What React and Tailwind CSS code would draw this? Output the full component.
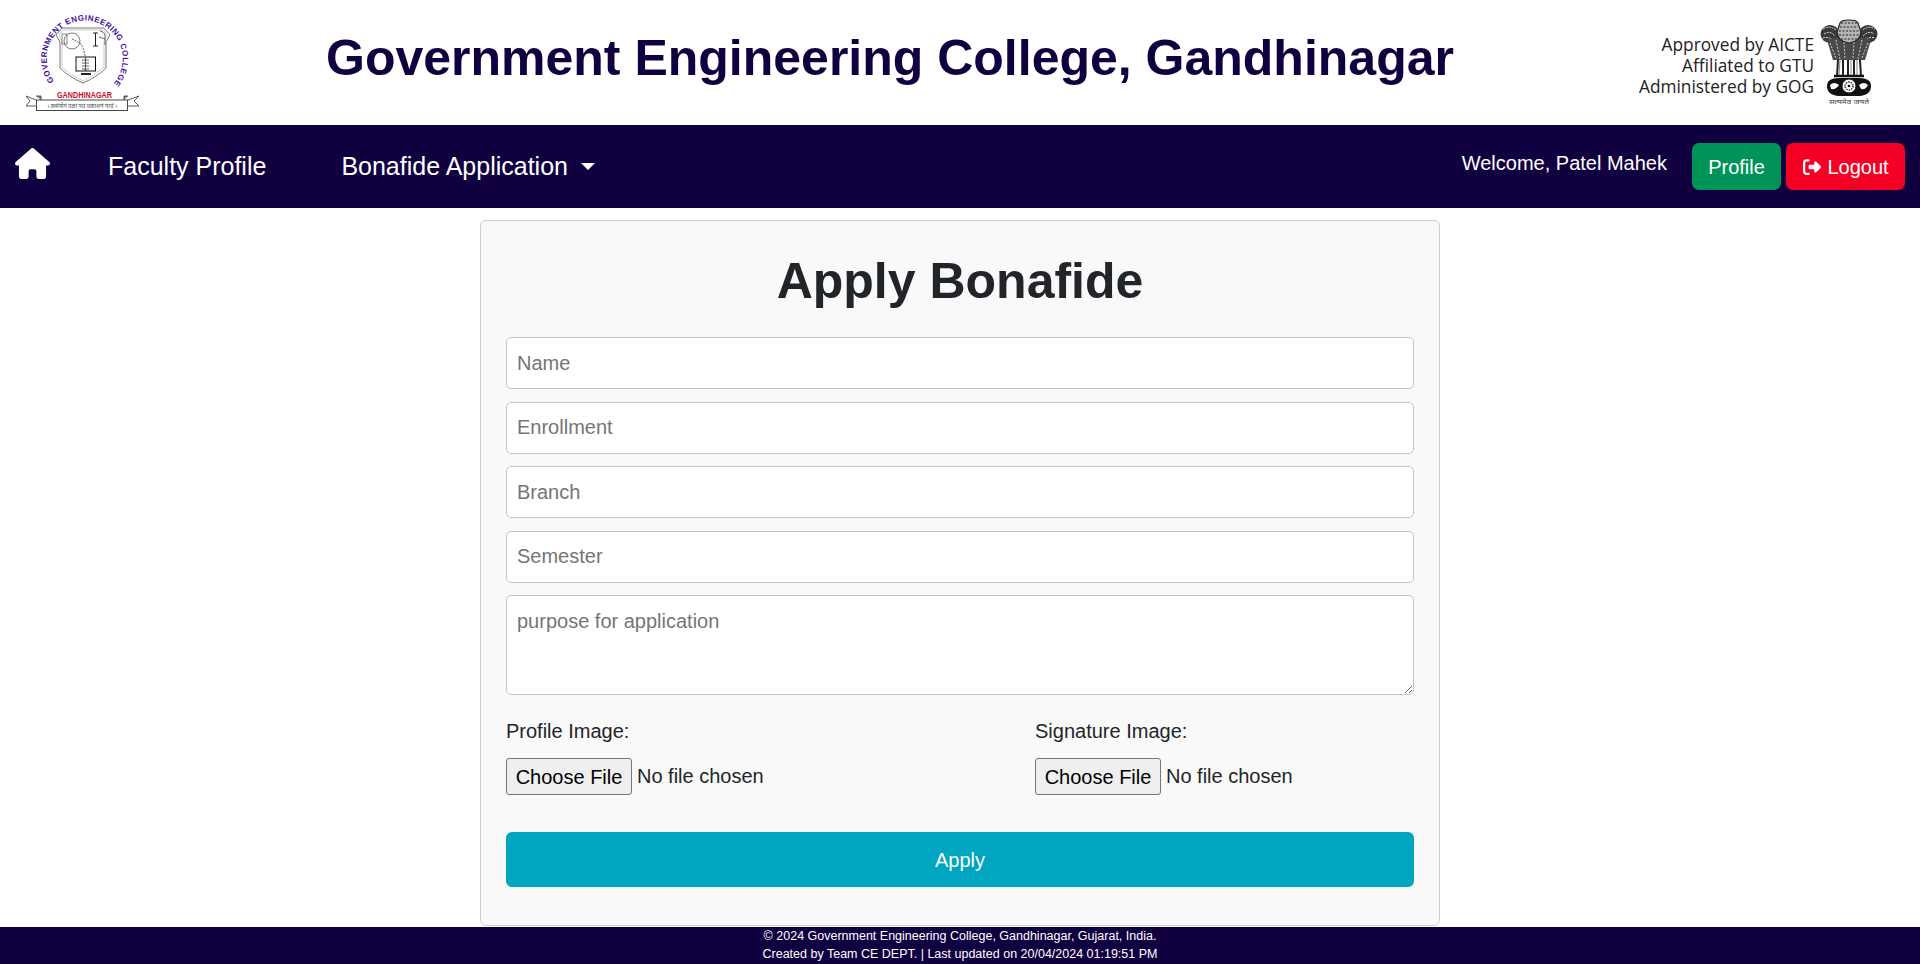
// src/App.jsx
import { FaHouse, FaRightFromBracket } from "react-icons/fa6";

// College seal, coordinates follow the 120x106 box it sits in
const CollegeLogo = () => (
  <svg width="120" height="106" viewBox="22 9 120 106" className="block">
    <defs>
      <path id="sealArc" d="M54 83 A38 38 0 1 1 113 86" fill="none" />
    </defs>
    <text fontFamily="Liberation Sans, sans-serif" fontWeight="700" fontSize="8" fill="#3f0f9e">
      <textPath href="#sealArc" textLength="170" lengthAdjust="spacing">GOVERNMENT ENGINEERING COLLEGE</textPath>
    </text>
    <path d="M56 37 L62 30 H104 L110 37 L106 44 V70 Q97 79 83 85 Q69 79 60 70 V44 Z" fill="none" stroke="#777" strokeWidth="1" />
    <path d="M59 37 L63 32 H103 L107 37 L104 44 V69 Q96 77 83 83 Q70 77 62 69 V44 Z" fill="none" stroke="#aaa" strokeWidth="0.600" />
    <circle cx="72" cy="43" r="8" fill="none" stroke="#555" strokeWidth="0.800" />
    <rect x="62" y="36" width="5" height="10" fill="none" stroke="#555" strokeWidth="0.700" />
    <path d="M72 41 L80 45 Q84 50 85 58" stroke="#333" strokeWidth="0.800" fill="none" strokeDasharray="2 1" />
    <path d="M93 35 H98 M95.500 35 V48 M93 48 H98" stroke="#222" strokeWidth="1" fill="none" />
    <path d="M100 33 Q105 34 105 38 V47 M99 39 L105 41" fill="none" stroke="#444" strokeWidth="0.800" />
    <rect x="76" y="59" width="19.500" height="14" fill="none" stroke="#111" strokeWidth="1" />
    <path d="M82 62 H89 M82 65 H89 M82 68 H89 M82 71 H89 M85.500 59 V73" stroke="#333" strokeWidth="0.800" />
    <path d="M81 76 H91" stroke="#222" strokeWidth="2" />
    <text x="84.500" y="100" textAnchor="middle" fontFamily="Liberation Sans, sans-serif" fontWeight="700" fontSize="8.500" fill="#c8102e" textLength="55" lengthAdjust="spacingAndGlyphs">GANDHINAGAR</text>
    <path d="M36 102 L26 98 L30 103 L26 108 H36" fill="#fff" stroke="#333" strokeWidth="0.800" />
    <path d="M36 98 H41 V102" fill="#888" stroke="#333" strokeWidth="0.800" />
    <path d="M128 102 L139 98 L134 103 L139 108 H128" fill="#fff" stroke="#333" strokeWidth="0.800" />
    <path d="M128 98 H124 V102" fill="#888" stroke="#333" strokeWidth="0.800" />
    <rect x="36.500" y="102" width="91" height="10.500" fill="#fff" stroke="#333" strokeWidth="0.900" />
    <text x="82" y="109.500" textAnchor="middle" fontFamily="Noto Sans CJK SC, Noto Sans, sans-serif" fontSize="5.500" fill="#555" textLength="70" lengthAdjust="spacingAndGlyphs">। कर्मयोगं प्रज्ञां पथ प्रकाशनं पार्थ ।</text>
  </svg>
);

// State emblem of India, a rough drawing of the lion capital
const EmblemLogo = () => (
  <svg width="60" height="88" viewBox="0 0 60 88" className="block">
    <ellipse cx="11" cy="16" rx="9.500" ry="9" fill="#3a3a3a" />
    <ellipse cx="49" cy="16" rx="9.500" ry="9" fill="#3a3a3a" />
    <path d="M4 11 Q10 7 17 12 M5 16 Q11 12 16 18 M4 20 Q10 18 15 23 M44 12 Q50 7 56 11 M44 18 Q50 12 55 16 M45 23 Q50 18 56 20" stroke="#ddd" strokeWidth="1" fill="none" strokeDasharray="2 1" />
    <path d="M8 22 Q18 18 30 18 Q42 18 52 22 L46 42 H14 Z" fill="#4a4a4a" />
    <path d="M11 25 L17 40 M17 22 L21 41 M25 24 L26 41 M35 24 L34 41 M43 22 L39 41 M49 25 L43 40" stroke="#ccc" strokeWidth="1" strokeDasharray="2 1.500" fill="none" />
    <path d="M21 5 Q22 2 30 2 Q38 2 39 5 L42 14 Q41 24 30 25 Q19 24 18 14 Z" fill="#b5b5b5" stroke="#222" strokeWidth="1.200" />
    <path d="M22 5 H38 M21 9 H39 M20 13 H40 M20 17 H40 M22 21 H38" stroke="#222" strokeWidth="1.200" strokeDasharray="2 1.500" />
    <path d="M17 42 H43 L45 58 H15 Z" fill="#fff" />
    <path d="M19 42 L18 58 M24 42 V58 M29 42 V58 M35 42 V58 M41 42 L42 58" stroke="#222" strokeWidth="2" />
    <path d="M21 42 L20 58 M32 42 V58 M38 42 V58" stroke="#888" strokeWidth="1" />
    <path d="M15 58 H45" stroke="#111" strokeWidth="2.500" />
    <path d="M8 68 Q8 60 20 60 H40 Q52 60 52 68 Q52 77 40 78 H20 Q8 77 8 68 Z" fill="#111" />
    <path d="M11 67 Q15 63 20 67 Q17 72 12 71 Z M40 67 Q45 63 49 67 Q47 72 42 71 Z" fill="#fff" />
    <circle cx="30" cy="68" r="7" fill="#fff" stroke="#111" strokeWidth="1" />
    <circle cx="30" cy="68" r="4" fill="none" stroke="#333" strokeWidth="1.500" strokeDasharray="1.500 1" />
    <circle cx="30" cy="68" r="1.300" fill="#111" />
    <text x="30" y="86" textAnchor="middle" fontFamily="Noto Sans, sans-serif" fontSize="6" fill="#444" textLength="40" lengthAdjust="spacingAndGlyphs">सत्यमेव जयते</text>
  </svg>
);

const Field = ({ placeholder }) => (
  <input
    type="text"
    placeholder={placeholder}
    className="block w-full h-[52px] rounded-[5px] border border-[#c4c4c4] bg-white px-[10px] text-[20px] text-[#212529] placeholder:text-[#757575] outline-none mb-[12.5px]"
  />
);

const FileField = ({ label, className }) => (
  <div className={className}>
    <div className="text-[20px] leading-[30px] text-[#212529] mb-[12px]">{label}</div>
    <div className="flex items-center text-[20px] text-[#212529]">
      <span className="inline-flex items-center justify-center w-[126px] h-[37px] rounded-[3px] border border-[#767676] bg-[#efefef] text-black">
        Choose File
      </span>
      <span className="ml-[5px] -mt-[1px]">No file chosen</span>
    </div>
  </div>
);

export default function App() {
  return (
    <div className="min-h-[964px] flex flex-col bg-white font-['Liberation_Sans',Arial,sans-serif]">
      {/* Top banner */}
      <header className="h-[125px] flex items-center">
        <div className="w-[120px] ml-[22px] -mt-[6px]">
          <CollegeLogo />
        </div>
        <h1 className="ml-[184px] -mt-[9px] text-[50px] font-bold leading-none text-[#10003f] whitespace-nowrap">
          Government Engineering College, Gandhinagar
        </h1>
        <div className="ml-auto flex items-center mr-[41px] -mt-[1px]">
          <div className="text-right text-[17.300px] leading-[21px] text-[#222] font-['Open_Sans',sans-serif] mr-[5px] mt-[6px]">
            <div>Approved by AICTE</div>
            <div>Affiliated to GTU</div>
            <div>Administered by GOG</div>
          </div>
          <EmblemLogo />
        </div>
      </header>

      {/* Navbar */}
      <nav className="h-[83px] bg-[#10003f] flex items-center text-white">
        <FaHouse className="ml-[15px] w-[35px] h-[31px] -mt-[7px]" />
        <a className="ml-[58px] text-[25px]">Faculty Profile</a>
        <a className="ml-[75px] text-[25px] flex items-center">
          Bonafide Application
          <span className="ml-[13px] mb-[1px] border-x-[7.500px] border-x-transparent border-t-[7.500px] border-t-white" />
        </a>
        <span className="ml-auto text-[20px] -mt-[8px]">Welcome, Patel Mahek</span>
        <button className="ml-[25px] w-[89px] h-[47px] rounded-[7px] bg-[#009357] text-[20px]">Profile</button>
        <button className="ml-[5px] mr-[15px] w-[119px] h-[47px] rounded-[7px] bg-[#f50025] text-[20px] flex items-center justify-center">
          <FaRightFromBracket className="w-[20px] h-[18px] mr-[5px]" />
          Logout
        </button>
      </nav>

      {/* Form card */}
      <main className="flex-1 flex justify-center pt-[12px]">
        <form className="w-[960px] h-[706px] rounded-[6px] border border-[#cfcfcf] bg-[#f9f9f9] px-[25px]">
          <h2 className="mt-[30px] mb-[26px] text-center text-[50px] leading-[60px] font-bold text-[#212529]">Apply Bonafide</h2>
          <Field placeholder="Name" />
          <Field placeholder="Enrollment" />
          <Field placeholder="Branch" />
          <Field placeholder="Semester" />
          <textarea
            placeholder="purpose for application"
            className="block w-full h-[100px] rounded-[5px] border border-[#c4c4c4] bg-white px-[10px] py-[10px] text-[20px] text-[#212529] placeholder:text-[#757575] outline-none resize-y"
          />
          <div className="flex mt-[21px]">
            <FileField label="Profile Image:" className="w-[529px]" />
            <FileField label="Signature Image:" />
          </div>
          <button type="button" className="mt-[37px] w-full h-[55px] rounded-[6px] bg-[#00a5bf] text-white text-[20px]">Apply</button>
        </form>
      </main>

      {/* Footer */}
      <footer className="h-[37px] bg-[#10003f] text-white text-center text-[12.500px] leading-[18px]">
        <div>© 2024 Government Engineering College, Gandhinagar, Gujarat, India.</div>
        <div>Created by Team CE DEPT. | Last updated on 20/04/2024 01:19:51 PM</div>
      </footer>
    </div>
  );
}
